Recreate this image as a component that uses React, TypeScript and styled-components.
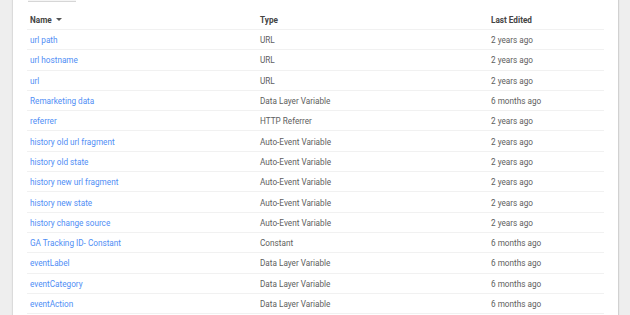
import React from "react";
import styled, { createGlobalStyle } from "styled-components";

const Global = createGlobalStyle`
  html, body { margin: 0; padding: 0; background: #eeeeee; }
  body { font-family: Roboto, "Liberation Sans", sans-serif; }
`;

const Page = styled.div`
  display: flex;
  height: 315px;
  overflow: hidden;
  padding: 0 12px 0 13px;
  box-sizing: border-box;
`;

const Card = styled.div`
  flex: 1;
  background: #fff;
  box-shadow: -1px 0 1px rgba(0,0,0,0.08), 1px 0 1px rgba(0,0,0,0.12);
  padding: 0 14px 0 14px;
  display: flex;
  flex-direction: column;
`;

const TopButton = styled.div`
  flex-shrink: 0;
  width: 48px;
  height: 1px;
  margin-left: 1px;
  border-bottom: 1px solid #d6d6d6;
  background: #f5f5f5;
`;

const Row = styled.div<{ $head?: boolean }>`
  flex-shrink: 0;
  display: grid;
  grid-template-columns: 230px 231px 1fr;
  align-items: center;
  height: ${(p) => (p.$head ? "28px" : "20.3px")};
  padding-left: 3px;
  padding-top: 1px;
  border-bottom: 1px solid #f1f1f1;
  box-sizing: border-box;
  font-size: 8.2px;
`;

const HeadCell = styled.div`
  color: #444;
  font-weight: 700;
  display: flex;
  align-items: center;
  gap: 4px;
  padding-top: 7px;
`;

const Caret = styled.span`
  width: 0;
  height: 0;
  border-left: 3px solid transparent;
  border-right: 3px solid transparent;
  border-top: 3px solid #555;
`;

const LinkCell = styled.a`
  color: #4f8ef5;
  text-decoration: none;
`;

const Cell = styled.div`
  color: #5e5e5e;
`;

const rows: [string, string, string][] = [
  ["url path", "URL", "2 years ago"],
  ["url hostname", "URL", "2 years ago"],
  ["url", "URL", "2 years ago"],
  ["Remarketing data", "Data Layer Variable", "6 months ago"],
  ["referrer", "HTTP Referrer", "2 years ago"],
  ["history old url fragment", "Auto-Event Variable", "2 years ago"],
  ["history old state", "Auto-Event Variable", "2 years ago"],
  ["history new url fragment", "Auto-Event Variable", "2 years ago"],
  ["history new state", "Auto-Event Variable", "2 years ago"],
  ["history change source", "Auto-Event Variable", "2 years ago"],
  ["GA Tracking ID- Constant", "Constant", "6 months ago"],
  ["eventLabel", "Data Layer Variable", "6 months ago"],
  ["eventCategory", "Data Layer Variable", "6 months ago"],
  ["eventAction", "Data Layer Variable", "6 months ago"],
];

export default function App() {
  return (
    <>
      <Global />
      <Page>
        <Card>
          <TopButton />
          <Row $head>
            <HeadCell>
              Name <Caret />
            </HeadCell>
            <HeadCell>Type</HeadCell>
            <HeadCell>Last Edited</HeadCell>
          </Row>
          {rows.map(([n, t, d]) => (
            <Row key={n}>
              <LinkCell href="#">{n}</LinkCell>
              <Cell>{t}</Cell>
              <Cell>{d}</Cell>
            </Row>
          ))}
        </Card>
      </Page>
    </>
  );
}
